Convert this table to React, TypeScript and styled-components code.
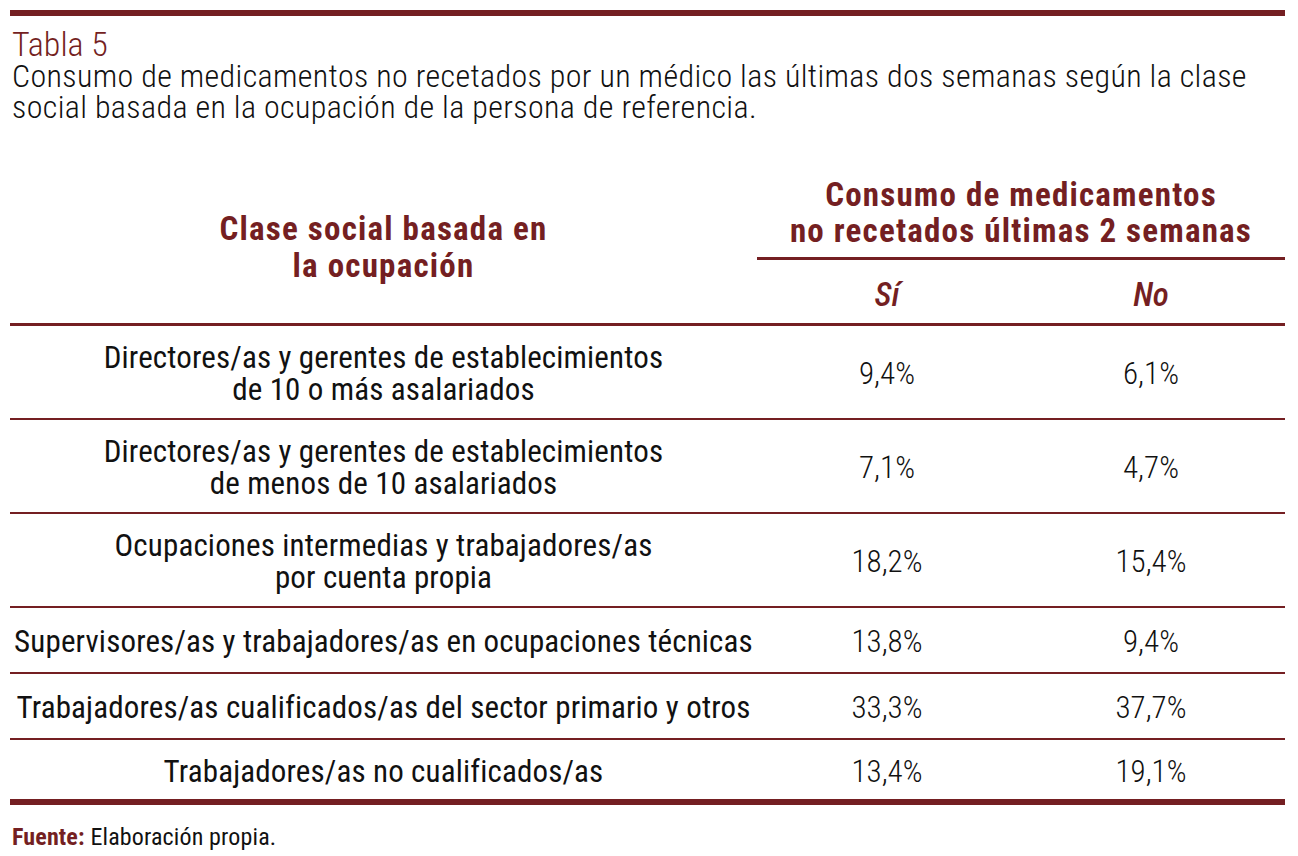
import React from 'react';
import styled, { createGlobalStyle } from 'styled-components';

const MAROON = '#741f22';
const INK = '#111111';

const GlobalStyle = createGlobalStyle`
  html, body {
    margin: 0;
    background: #ffffff;
  }
  body {
    font-family: Roboto, "Liberation Sans", sans-serif;
    color: ${INK};
  }
`;

const Page = styled.div`
  width: 1275px;
  padding: 10px 0 0 10px;
`;

const TopRule = styled.div`
  height: 6px;
  background: ${MAROON};
`;

const Caption = styled.div`
  margin-top: 12px;
  padding-left: 2px;
`;

const CaptionLabel = styled.div`
  color: ${MAROON};
  font-size: 34px;
  font-weight: 300;
  font-stretch: 75%;
  line-height: 33px;
`;

const CaptionText = styled.div`
  font-size: 32px;
  font-weight: 350;
  font-stretch: 80%;
  letter-spacing: 0.37px;
  line-height: 31px;
  white-space: nowrap;
`;

const COLUMNS = '747px 260px 1fr';

const Head = styled.div`
  display: grid;
  grid-template-columns: ${COLUMNS};
  margin-top: 54px;
  border-bottom: 3px solid ${MAROON};
  color: ${MAROON};
`;

const HeadText = styled.div`
  font-size: 33px;
  font-weight: 700;
  font-stretch: 75%;
  letter-spacing: 1.2px;
  text-align: center;
  white-space: nowrap;
`;

const StubHead = styled(HeadText)`
  grid-row: 1 / span 2;
  display: flex;
  align-items: center;
  justify-content: center;
  line-height: 37px;
  padding-bottom: 6px;
`;

const GroupHead = styled(HeadText)`
  grid-column: 2 / span 2;
  line-height: 36px;
  padding-bottom: 8px;
  border-bottom: 3px solid ${MAROON};
`;

const SubHead = styled.div`
  font-size: 33px;
  font-style: italic;
  font-weight: 500;
  font-stretch: 75%;
  line-height: 36px;
  text-align: center;
  padding: 17px 0 10px;
`;

const Row = styled.div<{ $height: number; $last?: boolean }>`
  display: grid;
  grid-template-columns: ${COLUMNS};
  height: ${p => p.$height}px;
  border-bottom: ${p => (p.$last ? 6 : 2)}px solid ${MAROON};
`;

const Cell = styled.div`
  display: flex;
  align-items: center;
  justify-content: center;
  text-align: center;
  padding-top: 4px;
  font-size: 31px;
  line-height: 32px;
  font-stretch: 75%;
  white-space: nowrap;
`;

const ClassCell = styled(Cell)`
  font-weight: 450;
  letter-spacing: 0.15px;
`;

const ValueCell = styled(Cell)`
  font-weight: 300;
`;

const Footer = styled.div`
  margin-top: 19px;
  padding-left: 2px;
  font-size: 24px;
  line-height: 26px;
  font-stretch: 75%;
  font-weight: 400;
  letter-spacing: 0.15px;
`;

const SourceLabel = styled.span`
  color: ${MAROON};
  font-weight: 700;
`;

type DataRow = { label: string[]; yes: string; no: string; height: number };

const rows: DataRow[] = [
  {
    label: ['Directores/as y gerentes de establecimientos', 'de 10 o más asalariados'],
    yes: '9,4%',
    no: '6,1%',
    height: 92,
  },
  {
    label: ['Directores/as y gerentes de establecimientos', 'de menos de 10 asalariados'],
    yes: '7,1%',
    no: '4,7%',
    height: 92,
  },
  {
    label: ['Ocupaciones intermedias y trabajadores/as', 'por cuenta propia'],
    yes: '18,2%',
    no: '15,4%',
    height: 92,
  },
  {
    label: ['Supervisores/as y trabajadores/as en ocupaciones técnicas'],
    yes: '13,8%',
    no: '9,4%',
    height: 64,
  },
  {
    label: ['Trabajadores/as cualificados/as del sector primario y otros'],
    yes: '33,3%',
    no: '37,7%',
    height: 64,
  },
  {
    label: ['Trabajadores/as no cualificados/as'],
    yes: '13,4%',
    no: '19,1%',
    height: 59,
  },
];

const App: React.FC = () => {
  return (
    <Page>
      <GlobalStyle />
      <TopRule />
      <Caption>
        <CaptionLabel>Tabla 5</CaptionLabel>
        <CaptionText>
          Consumo de medicamentos no recetados por un médico las últimas dos semanas según la clase
          <br />
          social basada en la ocupación de la persona de referencia.
        </CaptionText>
      </Caption>

      <Head>
        <StubHead>
          Clase social basada en
          <br />
          la ocupación
        </StubHead>
        <GroupHead>
          Consumo de medicamentos
          <br />
          no recetados últimas 2 semanas
        </GroupHead>
        <SubHead>Sí</SubHead>
        <SubHead>No</SubHead>
      </Head>

      {rows.map((row, i) => (
        <Row key={i} $height={row.height} $last={i === rows.length - 1}>
          <ClassCell>
            <div>
              {row.label.map((line, j) => (
                <div key={j}>{line}</div>
              ))}
            </div>
          </ClassCell>
          <ValueCell>{row.yes}</ValueCell>
          <ValueCell>{row.no}</ValueCell>
        </Row>
      ))}

      <Footer>
        <SourceLabel>Fuente:</SourceLabel> Elaboración propia.
      </Footer>
    </Page>
  );
};

export default App;
